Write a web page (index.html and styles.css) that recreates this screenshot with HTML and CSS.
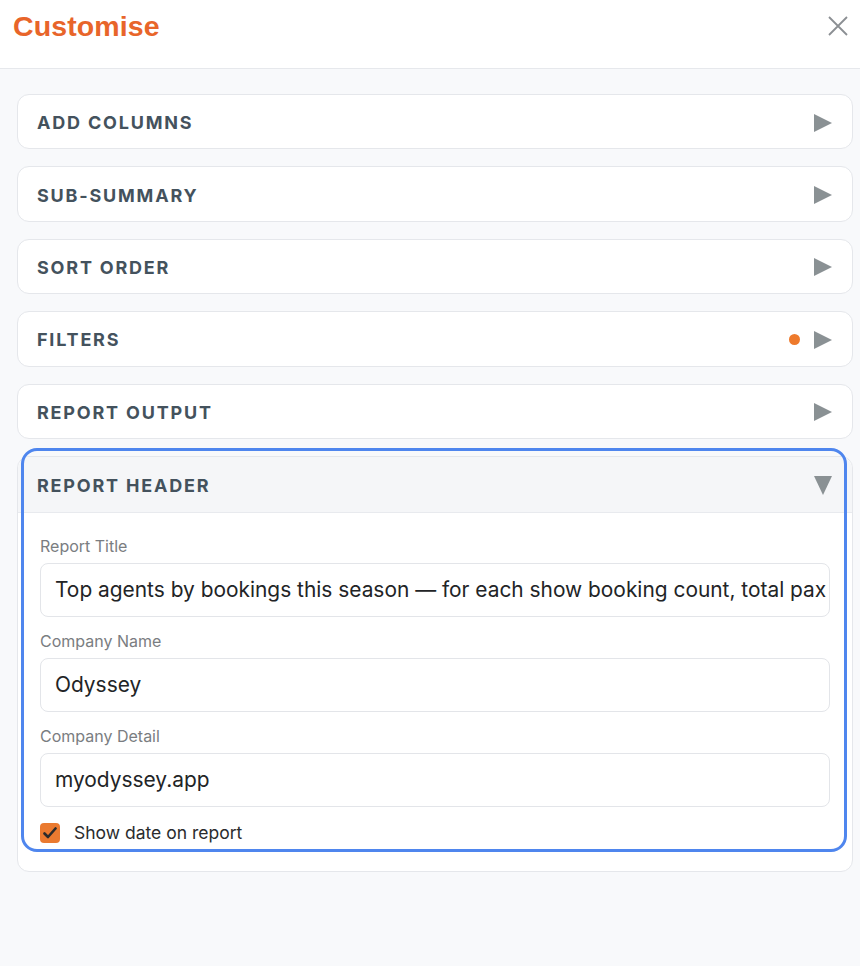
FILE: index.html
```html
<!DOCTYPE html>
<html lang="en">
<head>
<meta charset="utf-8">
<title>Customise</title>
<link rel="stylesheet" href="styles.css">
</head>
<body>
<div class="panel">
  <header class="panel-head">
    <h1 class="panel-title">Customise</h1>
    <button class="close" aria-label="Close">
      <svg width="20" height="20" viewBox="0 0 20 20"><path d="M1 1L19 19M19 1L1 19" stroke="#8b8f93" stroke-width="1.8" fill="none"/></svg>
    </button>
  </header>
  <main class="panel-body">
    <section class="card">
      <div class="card-head"><span class="card-title">ADD COLUMNS</span><span class="arrow right"></span></div>
    </section>
    <section class="card">
      <div class="card-head"><span class="card-title">SUB-SUMMARY</span><span class="arrow right"></span></div>
    </section>
    <section class="card">
      <div class="card-head"><span class="card-title">SORT ORDER</span><span class="arrow right"></span></div>
    </section>
    <section class="card">
      <div class="card-head"><span class="card-title">FILTERS</span><span class="dot"></span><span class="arrow right"></span></div>
    </section>
    <section class="card">
      <div class="card-head"><span class="card-title">REPORT OUTPUT</span><span class="arrow right"></span></div>
    </section>
    <section class="card open">
      <div class="card-head shaded"><span class="card-title">REPORT HEADER</span><span class="arrow down"></span></div>
      <div class="card-content">
        <label class="field">
          <span class="field-label">Report Title</span>
          <input class="field-input" type="text" value="Top agents by bookings this season — for each show booking count, total pax and revenue">
        </label>
        <label class="field">
          <span class="field-label">Company Name</span>
          <input class="field-input" type="text" value="Odyssey">
        </label>
        <label class="field">
          <span class="field-label">Company Detail</span>
          <input class="field-input" type="text" value="myodyssey.app">
        </label>
        <label class="check">
          <span class="box"><svg width="14" height="12" viewBox="0 0 14 12"><path d="M1.5 6.5L5 10L12.5 1.5" stroke="#2b2b2b" stroke-width="2.6" fill="none" stroke-linecap="round" stroke-linejoin="round"/></svg></span>
          <span class="check-text">Show date on report</span>
        </label>
      </div>
      <span class="focus-ring"></span>
    </section>
  </main>
</div>
</body>
</html>
```
FILE: styles.css
```css
* { box-sizing: border-box; }

html, body {
  margin: 0;
  height: 100%;
  background: #f8f9fb;
  font-family: Inter, "Noto Sans", sans-serif;
}

.panel {
  min-height: 100%;
  background: #f8f9fb;
}

.panel-head {
  height: 69px;
  background: #ffffff;
  border-bottom: 1px solid #e6e8ec;
  display: flex;
  align-items: flex-start;
  justify-content: space-between;
  padding: 10px 12px 0 13px;
}

.panel-title {
  margin: 0;
  font-family: "Liberation Sans", Arial, sans-serif;
  font-weight: 700;
  font-size: 28.5px;
  line-height: 32px;
  color: #e8652a;
  letter-spacing: 0.1px;
}

.close {
  border: 0;
  background: none;
  padding: 0;
  margin-top: 6px;
  width: 20px;
  height: 20px;
  cursor: pointer;
}

.panel-body {
  padding: 25px 7px 40px 17px;
  display: flex;
  flex-direction: column;
  gap: 17px;
}

.card {
  position: relative;
  background: #ffffff;
  border: 1px solid #e5e7eb;
  border-radius: 12px;
}

.card-head {
  height: 53.4px;
  display: flex;
  align-items: center;
  padding: 2px 20px 0 19px;
}

.card-head.shaded {
  background: #f5f6f8;
  border-bottom: 1px solid #e8eaee;
  border-radius: 12px 12px 0 0;
  height: 56px;
}

.card-title {
  flex: 1;
  font-weight: 700;
  font-size: 18px;
  letter-spacing: 1.8px;
  color: #44525d;
}

.dot {
  width: 11px;
  height: 11px;
  border-radius: 50%;
  background: #ee7a2c;
  margin-right: 14px;
}

.arrow {
  width: 0;
  height: 0;
}

.arrow.right {
  border-top: 9px solid transparent;
  border-bottom: 9px solid transparent;
  border-left: 18px solid #8a9194;
}

.arrow.down {
  border-left: 9px solid transparent;
  border-right: 9px solid transparent;
  border-top: 19px solid #8a9194;
}

.card-content {
  padding: 23px 22px 28px 22px;
  display: flex;
  flex-direction: column;
}

.field {
  display: flex;
  flex-direction: column;
  margin-bottom: 14px;
}

.field-label {
  font-size: 16px;
  line-height: 20px;
  color: #7a7d81;
  margin-bottom: 7px;
}

.field-input {
  height: 54px;
  border: 1px solid #e3e5e9;
  border-radius: 8px;
  background: #ffffff;
  padding: 0 1px 0 14px;
  font-family: Inter, "Noto Sans", sans-serif;
  font-size: 20.9px;
  color: #222426;
  outline: none;
}

.check {
  display: flex;
  align-items: center;
  gap: 14px;
  margin-top: 2px;
  height: 20px;
}

.box {
  width: 20px;
  height: 20px;
  border-radius: 4px;
  background: #ea7a30;
  display: flex;
  align-items: center;
  justify-content: center;
}

.check-text {
  font-size: 17.5px;
  color: #2a2c2e;
}

.focus-ring {
  position: absolute;
  left: 3px;
  right: 5px;
  top: -9px;
  bottom: 19px;
  border: 3px solid #4f86ee;
  border-radius: 16px;
  pointer-events: none;
}
```
